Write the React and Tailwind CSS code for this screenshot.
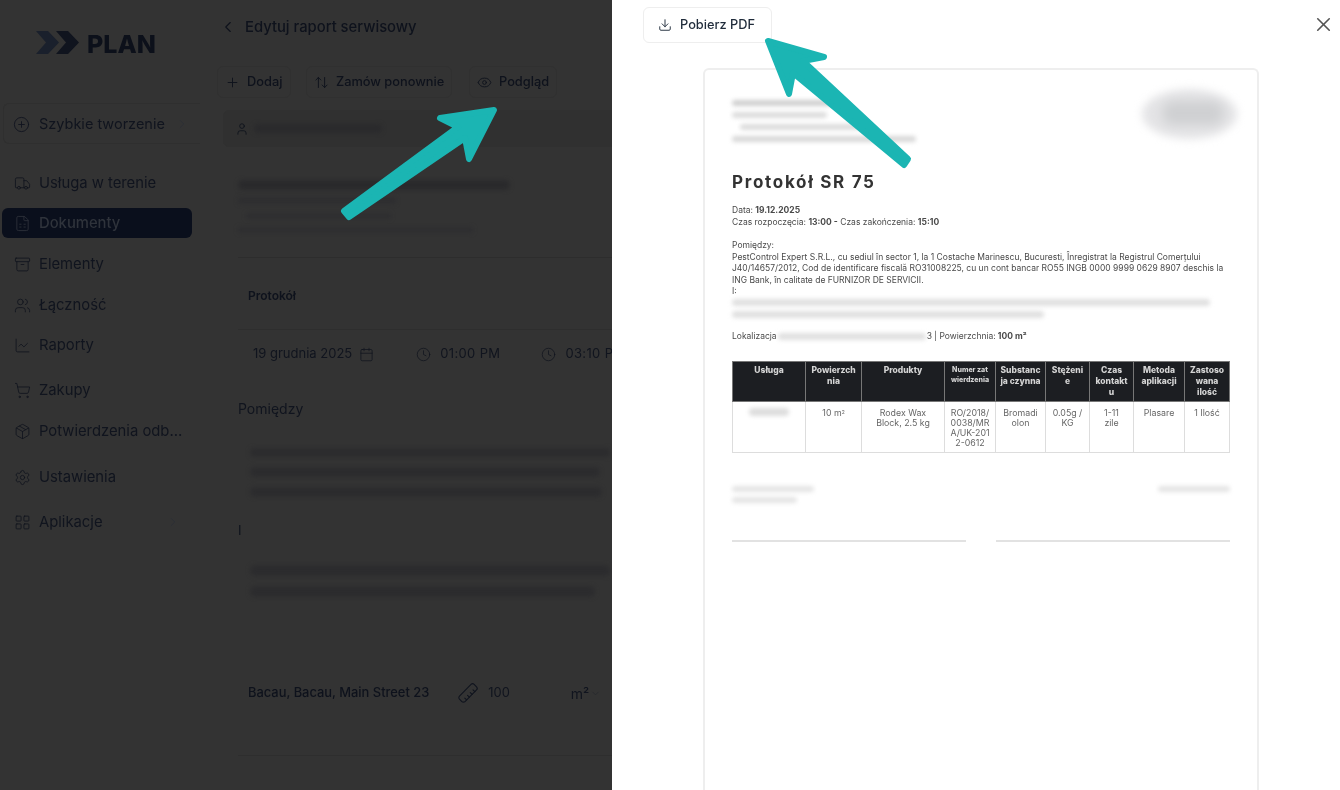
import {
  Archive,
  ArrowUpDown,
  Calendar,
  ChartLine,
  ChevronDown,
  ChevronLeft,
  ChevronRight,
  CirclePlus,
  Clock,
  Download,
  Eye,
  FileSpreadsheet,
  LayoutGrid,
  Package,
  Plus,
  Ruler,
  Settings,
  ShoppingCart,
  Truck,
  User,
  Users,
  X
} from 'lucide-react';

const navItems = [
  { label: 'Usługa w terenie', icon: Truck, className: 'mt-[24px] text-[#10141e]' },
  { label: 'Dokumenty', icon: FileSpreadsheet, className: 'mt-[10px] bg-[#0a0f1c] font-medium text-[#2f333b]' },
  { label: 'Elementy', icon: Archive, className: 'mt-[11px] text-[#10141e]' },
  { label: 'Łączność', icon: Users, className: 'mt-[11px] text-[#10141e]' },
  { label: 'Raporty', icon: ChartLine, className: 'mt-[10px] text-[#10141e]' },
  { label: 'Zakupy', icon: ShoppingCart, className: 'mt-[15px] text-[#10141e]' },
  { label: 'Potwierdzenia odb...', icon: Package, className: 'mt-[11px] text-[#10141e]' },
  { label: 'Ustawienia', icon: Settings, className: 'mt-[16px] text-[#10141e]' },
  { label: 'Aplikacje', icon: LayoutGrid, className: 'mt-[15px] text-[#10141e]', chevron: true }
];

const columns = [
  { head: ['Usługa'], width: 'w-[73px]', blurred: true },
  { head: ['Powierzch', 'nia'], width: 'w-[56px]', value: [<>10 m<sup className="text-[5px]">2</sup></>] },
  { head: ['Produkty'], width: 'w-[83px]', value: ['Rodex Wax', 'Block, 2.5 kg'] },
  { head: ['Numer zat', 'wierdzenia'], width: 'w-[51px]', small: true, value: ['RO/2018/', '0038/MR', 'A/UK-201', '2-0612'] },
  { head: ['Substanc', 'ja czynna'], width: 'w-[50px]', value: ['Bromadi', 'olon'] },
  { head: ['Stężeni', 'e'], width: 'w-[44px]', value: ['0.05g /', 'KG'] },
  { head: ['Czas', 'kontakt', 'u'], width: 'w-[44px]', value: ['1-11', 'zile'] },
  { head: ['Metoda', 'aplikacji'], width: 'w-[51px]', value: ['Plasare'] },
  { head: ['Zastoso', 'wana', 'ilość'], width: 'w-[45px]', value: ['1 Ilość'] }
];

function Smudge({ className }) {
  return <div className={`rounded-full blur-[2px] ${className}`} />;
}

function Lines({ items }) {
  return items.map((line, i) => <div key={i}>{line}</div>);
}

function ToolButton({ icon: Icon, label, className }) {
  return (
    <div className={`flex h-[32px] items-center gap-[7px] rounded-md border border-[#303030] text-[12.8px] font-medium text-[#0e121c] ${className}`}>
      <Icon className="h-[15px] w-[15px] shrink-0" strokeWidth={1.5} />
      {label}
    </div>
  );
}

function Sidebar() {
  return (
    <aside className="w-[200px] shrink-0">
      <div className="flex h-[103px] items-start pl-[36px] pt-[29px]">
        <svg width="43" height="23" viewBox="0 0 43 23" className="mt-[2px]" fill="#10141e">
          <path d="M0 0h12l11 11.500-11 11.500H0l10-11.500z" fill="#1a202c" />
          <path d="M20 0h12l11 11.500-11 11.500H20l10-11.500z" />
        </svg>
        <span className="ml-[8px] text-[25px] font-extrabold leading-[30px] text-[#0c101a]">PLAN</span>
      </div>
      <div className="ml-[3px] flex h-[41px] items-center rounded-l-md border border-r-0 border-[#2f2f2f] pl-[9px] pt-[1px] text-[14.5px] text-[#10141e]">
        <CirclePlus className="mr-[9px] h-[17px] w-[17px] shrink-0" strokeWidth={1.3} />
        Szybkie tworzenie
        <ChevronRight className="ml-[10px] h-[14px] w-[14px] shrink-0 text-[#2a2e36]" strokeWidth={1.5} />
      </div>
      <nav className="flex flex-col">
        {navItems.map(({ label, icon: Icon, className, chevron }) => (
          <div key={label} className={`ml-[2px] flex h-[30px] w-[190px] items-center rounded-md pl-[12px] text-[14.8px] ${className}`}>
            <Icon className="mr-[8px] h-[17px] w-[17px] shrink-0" strokeWidth={1.2} />
            {label}
            {chevron && <ChevronRight className="ml-auto mr-[12px] h-[14px] w-[14px] shrink-0 text-[#2a2e36]" strokeWidth={1.5} />}
          </div>
        ))}
      </nav>
    </aside>
  );
}

function EditForm() {
  return (
    <main className="min-w-0 flex-1 pl-[17px] text-[#10141e]">
      <header className="flex h-[54px] items-center pl-[2px]">
        <ChevronLeft className="mr-[8px] h-[18px] w-[18px] shrink-0 text-[#0e121c]" strokeWidth={1.5} />
        <span className="text-[14.8px] font-medium text-[#0e121c]">Edytuj raport serwisowy</span>
      </header>
      <div className="mt-[12px] flex">
        <ToolButton icon={Plus} label="Dodaj" className="w-[74px] pl-[7px]" />
        <ToolButton icon={ArrowUpDown} label="Zamów ponownie" className="ml-[15px] w-[146px] pl-[7px]" />
        <ToolButton icon={Eye} label="Podgląd" className="ml-[17px] w-[88px] pl-[7px]" />
      </div>
      <div className="ml-[6px] mt-[12px] flex h-[37px] w-[400px] items-center rounded-md border border-[#303030] bg-[#303030] pl-[11px]">
        <User className="h-[14px] w-[14px] shrink-0 text-[#0e121c]" strokeWidth={1.5} />
        <Smudge className="ml-[5px] h-[9px] w-[128px] bg-[#2a2a2c]" />
      </div>
      <div className="ml-[21px] mt-[33px] h-[78px] border-b border-[#2d2d2d]">
        <Smudge className="h-[10px] w-[272px] bg-[#2a2a2c]" />
        <Smudge className="mt-[7px] h-[7px] w-[158px] bg-[#2e2e30]" />
        <Smudge className="mt-[9px] ml-[8px] h-[6px] w-[145px] bg-[#2e2e30]" />
        <Smudge className="mt-[8px] h-[6px] w-[235px] bg-[#2e2e30]" />
      </div>
      <div className="ml-[21px] h-[72px] border-b border-[#2e2e2e] pl-[10px] pt-[30px] text-[12px] font-semibold leading-[16px] text-[#0e121c]">
        Protokół
      </div>
      <div className="ml-[21px] mt-[9px] flex h-[30px] items-center whitespace-nowrap text-[13px] text-[#10141e]">
        <span className="ml-[15px]">19 grudnia 2025</span>
        <Calendar className="ml-[7px] h-[15px] w-[15px] shrink-0" strokeWidth={1.2} />
        <Clock className="ml-[42px] h-[15px] w-[15px] shrink-0" strokeWidth={1.2} />
        <span className="ml-[9px] tracking-[0.35px]">01:00 PM</span>
        <Clock className="ml-[41px] h-[15px] w-[15px] shrink-0" strokeWidth={1.2} />
        <span className="ml-[9px] tracking-[0.35px]">03:10 PM</span>
      </div>
      <div className="ml-[21px] mt-[30px] text-[14px] leading-[20px]">Pomiędzy</div>
      <div className="ml-[33px] mt-[29px] flex flex-col gap-[10px]">
        <Smudge className="h-[9px] w-[360px] bg-[#2c2c2e]" />
        <Smudge className="h-[10px] w-[350px] bg-[#2c2c2e]" />
        <Smudge className="h-[10px] w-[352px] bg-[#2c2c2e]" />
      </div>
      <div className="ml-[21px] mt-[23px] h-[20px] text-[13px] leading-[20px] text-[#0e121c]">I</div>
      <div className="ml-[33px] mt-[25px] flex flex-col gap-[10px]">
        <Smudge className="h-[11px] w-[360px] bg-[#2c2c2e]" />
        <Smudge className="h-[11px] w-[345px] bg-[#2c2c2e]" />
      </div>
      <div className="ml-[21px] mt-[74px] flex h-[44px] items-center whitespace-nowrap text-[12.9px]">
        <span className="pl-[10px] font-medium text-[#0e121c]">Bacau, Bacau, Main Street 23</span>
        <Ruler className="ml-[28px] h-[22px] w-[22px] shrink-0 rotate-90" strokeWidth={1.2} />
        <span className="ml-[9px]">100</span>
        <span className="ml-[61px] text-[14px]">m²</span>
        <ChevronDown className="ml-[1px] h-[11px] w-[11px] shrink-0 text-[#23262c]" strokeWidth={1.5} />
      </div>
      <div className="ml-[21px] mt-[40px] border-t border-[#2e2e2e]" />
    </main>
  );
}

function ReportTable() {
  return (
    <table className="mt-[19px] w-[497px] table-fixed border-collapse text-center">
      <thead>
        <tr className="h-[40px] bg-[#1c1e22]">
          {columns.map(({ head, width, small }) => (
            <th key={head[0]} className={`${width} whitespace-nowrap border border-[#777] pt-[3px] align-top font-extrabold text-[#d4d4d4] ${small ? 'text-[7px] leading-[10px]' : 'text-[8.5px] leading-[11px]'}`}>
              <Lines items={head} />
            </th>
          ))}
        </tr>
      </thead>
      <tbody>
        <tr className="h-[51px]">
          {columns.map(({ head, value, blurred }) => (
            <td key={head[0]} className="whitespace-nowrap border border-[#ddd] pt-[6px] align-top text-[8.8px] leading-[10px] text-[#666]">
              {blurred ? <Smudge className="mx-auto h-[8px] w-[40px] bg-[#ddd]" /> : <Lines items={value} />}
            </td>
          ))}
        </tr>
      </tbody>
    </table>
  );
}

function ReportPaper() {
  return (
    <div className="ml-[91px] mt-[25px] h-[760px] w-[556px] rounded-t-md border-2 border-b-0 border-[#eeeeee] px-[27px] pt-[28px]">
      <div className="flex justify-between">
        <div className="flex flex-col gap-[6px] pt-[2px]">
          <Smudge className="h-[6px] w-[100px] bg-[#cfcfcf]" />
          <Smudge className="h-[6px] w-[95px] bg-[#dcdcdc]" />
          <Smudge className="ml-[8px] h-[6px] w-[120px] bg-[#dcdcdc]" />
          <Smudge className="h-[6px] w-[184px] bg-[#d8d8d8]" />
        </div>
        <div className="-mr-[7px] -mt-[9px] h-[50px] w-[95px] rounded-[50%] bg-[#e4e4e6] blur-[4px]">
          <div className="ml-[20px] mt-[12px] h-[24px] w-[62px] rounded-full bg-[#cfd0d2] blur-[3px]" />
        </div>
      </div>
      <h1 className="mt-[28px] text-[17px] font-bold leading-[24px] tracking-[1.7px] text-[#333]">Protokół SR 75</h1>
      <div className="mt-[11px] text-[8.5px] leading-[11.5px] text-[#4a4a4a]">
        <p>Data: <b>19.12.2025</b></p>
        <p>Czas rozpoczęcia: <b>13:00 -</b> Czas zakończenia: <b>15:10</b></p>
        <p className="mt-[12px]">Pomiędzy:</p>
        <p className="whitespace-nowrap">PestControl Expert S.R.L., cu sediul în sector 1, la 1 Costache Marinescu, Bucuresti, Înregistrat la Registrul Comerțului</p>
        <p className="whitespace-nowrap">J40/14657/2012, Cod de identificare fiscală RO31008225, cu un cont bancar RO55 INGB 0000 9999 0629 8907 deschis la</p>
        <p>ING Bank, în calitate de FURNIZOR DE SERVICII.</p>
        <p>I:</p>
        <Smudge className="mb-[5px] mt-[1px] h-[7px] w-[478px] bg-[#e0e0e0]" />
        <Smudge className="h-[7px] w-[312px] bg-[#e0e0e0]" />
        <div className="mt-[13px] flex items-center whitespace-nowrap">
          Lokalizacja
          <Smudge className="mx-[1px] h-[7px] w-[148px] bg-[#e0e0e0]" />
          3 | Powierzchnia: <b className="ml-[2px]">100 m²</b>
        </div>
      </div>
      <ReportTable />
      <div className="mt-[33px] flex justify-between">
        <div className="flex flex-col gap-[5px]">
          <Smudge className="h-[6px] w-[82px] bg-[#e4e4e4]" />
          <Smudge className="h-[6px] w-[65px] bg-[#e4e4e4]" />
        </div>
        <Smudge className="h-[6px] w-[72px] bg-[#e4e4e4]" />
      </div>
      <div className="mt-[37px] flex justify-between">
        <div className="h-[2px] w-[234px] bg-[#e2e2e2]" />
        <div className="h-[2px] w-[234px] bg-[#e2e2e2]" />
      </div>
    </div>
  );
}

function PreviewPanel() {
  return (
    <section className="min-w-0 flex-1 bg-white">
      <div className="flex items-start">
        <button className="ml-[31px] mt-[7px] flex h-[36px] w-[129px] items-center rounded-md border border-[#eeeeee] pl-[14px] text-[12.8px] font-medium text-[#1f2b3a]">
          <Download className="mr-[8px] h-[14px] w-[14px] shrink-0" strokeWidth={1.6} />
          Pobierz PDF
        </button>
        <X className="ml-auto mr-[5px] mt-[13px] h-[23px] w-[23px] shrink-0 text-[#555]" strokeWidth={1.7} />
      </div>
      <ReportPaper />
    </section>
  );
}

export default function App() {
  return (
    <div className="relative flex h-[790px] w-[1340px] overflow-hidden font-['Inter',sans-serif] blur-[0.35px]">
      <div className="flex w-[612px] shrink-0 overflow-hidden bg-[#333333]">
        <Sidebar />
        <EditForm />
      </div>
      <PreviewPanel />
      <svg className="pointer-events-none absolute inset-0" width="1340" height="790" viewBox="0 0 1340 790" fill="#1bb5b3" stroke="#1bb5b3" strokeWidth="6" strokeLinejoin="round">
        <path d="M344 211 L458 127 L440 118 L494 110 L469 159 L465 138 L349 217Z" />
        <path d="M768 41 L824 57 L803 61 L908 159 L904 165 L793 73 L789 94Z" />
      </svg>
    </div>
  );
}
